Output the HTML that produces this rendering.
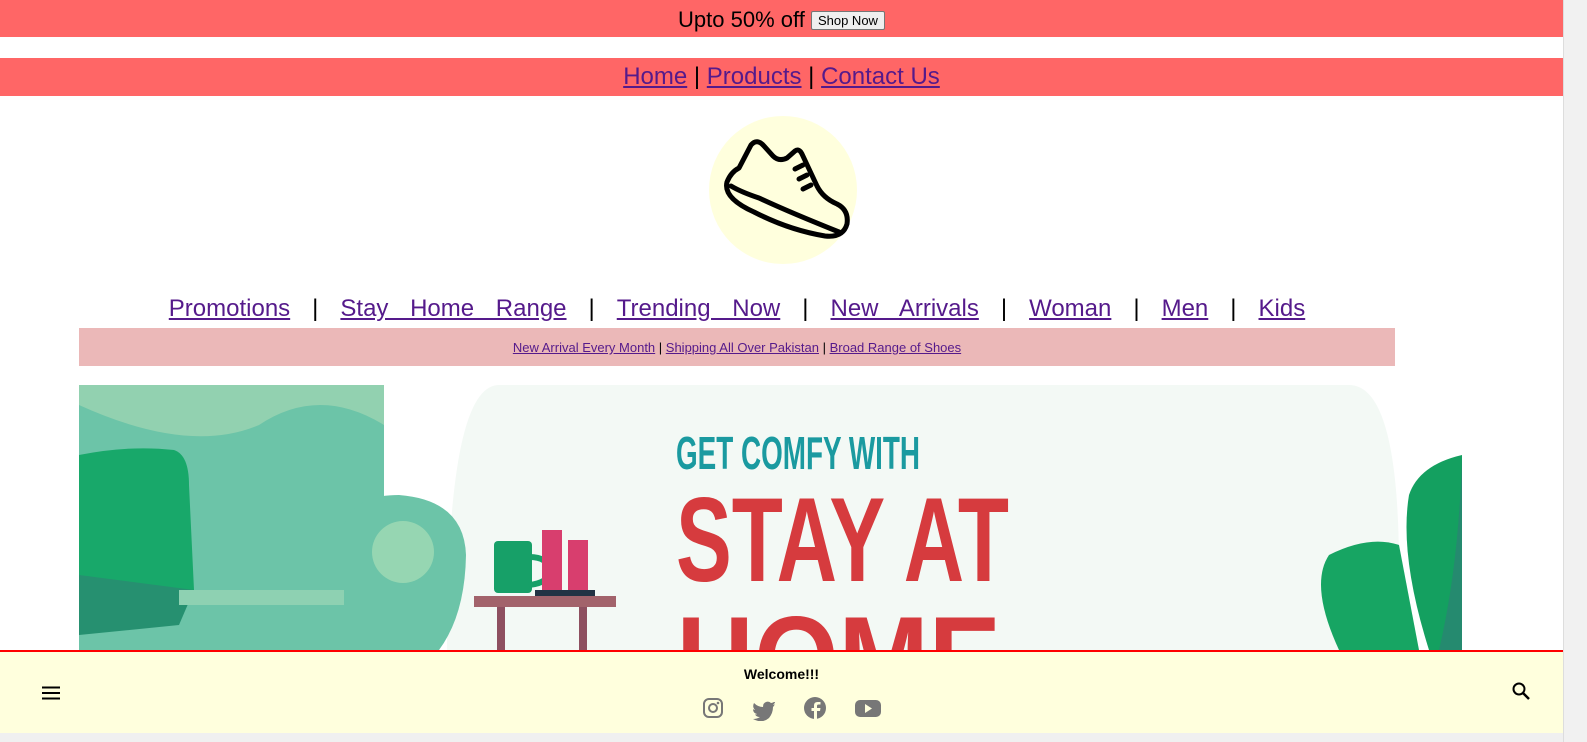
<!DOCTYPE html>
<html><head><meta charset="utf-8"><style>
*{margin:0;padding:0;box-sizing:border-box}
html,body{width:1587px;height:742px;overflow:hidden;background:#fff;font-family:"Liberation Sans","DejaVu Sans",sans-serif}
#sb{position:absolute;left:1563px;top:0;width:24px;height:742px;background:#f1f1f1;border-left:1px solid #ddd}
a{color:#551a8b}
.top{position:absolute;left:0;top:0;width:1563px;height:37px;background:#ff6666;text-align:center;font-size:22px;line-height:39px}
.top button{font-size:13px;padding:1px 6px;vertical-align:2px;background:#efefef;border:1px solid #767676;border-radius:2px}
.nav{position:absolute;left:0;top:58px;width:1563px;height:38px;background:#ff6666;text-align:center;font-size:24px;line-height:38px}
.logo{position:absolute;left:709px;top:116px;width:148px;height:148px;border-radius:50%;background:#ffffdd}
.cats{position:absolute;left:79px;top:291px;width:1316px;text-align:center;font-size:24px;line-height:36px;word-spacing:15px}
.cats span{margin:0 22px}
.strip{position:absolute;left:79px;top:328px;width:1316px;height:38px;background:#ebb8b8;text-align:center;font-size:13px;line-height:40px}
.ban{position:absolute;left:79px;top:385px;width:1383px;height:265px;overflow:hidden;background:#fff}
.foot{position:absolute;left:0;top:650px;width:1563px;height:83px;background:#ffffdd;border-top:2px solid #f00}
.bot{position:absolute;left:0;top:733px;width:1563px;height:9px;background:#f0f0f0}
</style></head><body>
<div class="top">Upto 50% off <button>Shop Now</button></div>
<div class="nav"><a href="#">Home</a> | <a href="#">Products</a> | <a href="#">Contact Us</a></div>
<div class="logo"><svg width="148" height="148" viewBox="0 0 148 148"><path d="M42 29 Q48 22 55 30 L64 40 Q70 46 78 42 L86 35 Q90 32 93 38 L108 70 Q114 82 128 88 Q140 94 138 108 Q134 122 116 120 Q80 114 45 96 Q14 82 18 66 Q22 56 30 52 Z M22 70 Q32 76 50 82 Q80 96 130 116" fill="none" stroke="#000" stroke-width="5" stroke-linejoin="round" stroke-linecap="round"/><path d="M86 53l8-4M90 63l8-4M94 73l8-4" stroke="#000" stroke-width="5" stroke-linecap="round"/></svg></div>
<div class="cats"><a href="#">Promotions</a><span>|</span><a href="#">Stay Home Range</a><span>|</span><a href="#">Trending Now</a><span>|</span><a href="#">New Arrivals</a><span>|</span><a href="#">Woman</a><span>|</span><a href="#">Men</a><span>|</span><a href="#">Kids</a></div>
<div class="strip"><a href="#">New Arrival Every Month</a> | <a href="#">Shipping All Over Pakistan</a> | <a href="#">Broad Range of Shoes</a></div>
<div class="ban"><svg width="1383" height="265" viewBox="0 0 1383 265">
<path d="M368 265 Q368 0 420 0 L1270 0 Q1330 0 1318 265Z" fill="#f3f9f5"/>
<rect x="0" y="0" width="305" height="265" fill="#6cc4a8"/>
<path d="M0 0H305V40Q240 0 180 40Q110 70 0 20Z" fill="#92d1b0"/>
<path d="M0 70Q50 60 95 65Q110 70 110 100L115 205Q60 215 0 230Z" fill="#18a86a"/>
<path d="M0 190L115 205L100 240L0 250Z" fill="#269070"/>
<rect x="100" y="205" width="200" height="15" fill="#8ed1b2"/>
<path d="M265 140Q275 110 320 110Q385 115 387 170Q386 230 360 265H265Z" fill="#6cc4a8"/>
<circle cx="324" cy="167" r="31" fill="#96d6b2"/>
<rect x="395" y="211" width="142" height="11" fill="#a2636b"/>
<rect x="418" y="222" width="8" height="43" fill="#8e5060"/><rect x="500" y="222" width="8" height="43" fill="#8e5060"/>
<rect x="415" y="156" width="38" height="52" rx="4" fill="#17a068"/>
<path d="M450 172q20 0 20 14q0 12-20 14" fill="none" stroke="#17a068" stroke-width="6"/>
<rect x="463" y="145" width="20" height="62" fill="#d83e6e"/><rect x="489" y="155" width="20" height="52" fill="#d83e6e"/>
<rect x="456" y="205" width="60" height="6" fill="#234"/>
<text x="597" y="84" font-family="Liberation Sans Narrow,Liberation Sans,sans-serif" font-weight="bold" font-size="46" fill="#1a9aa0" textLength="244" lengthAdjust="spacingAndGlyphs">GET COMFY WITH</text>
<text x="597" y="196" font-family="Liberation Sans Narrow,Liberation Sans,sans-serif" font-weight="bold" font-size="120" fill="#d63b3e" textLength="333" lengthAdjust="spacingAndGlyphs">STAY AT</text>
<text x="597" y="315" font-family="Liberation Sans Narrow,Liberation Sans,sans-serif" font-weight="bold" font-size="120" fill="#d63b3e" textLength="325" lengthAdjust="spacingAndGlyphs">HOME</text>
<path d="M1383 70Q1340 80 1330 110Q1320 170 1350 265H1383Z" fill="#14a060"/>
<path d="M1320 160Q1290 150 1250 170Q1230 200 1260 265H1340Z" fill="#17a563"/>
<path d="M1383 70V265H1360Q1380 180 1383 70Z" fill="#258a6f"/>
</svg></div>
<div class="foot">
<svg style="position:absolute;left:42px;top:34px" width="18" height="14"><path d="M0 1.5h18M0 7h18M0 12.5h18" stroke="#000" stroke-width="2"/></svg>
<div style="position:absolute;left:0;width:1563px;top:14px;text-align:center;font-weight:bold;font-size:14px">Welcome!!!</div>
<svg style="position:absolute;left:702px;top:45px" width="180" height="24" fill="#777">
<rect x="2" y="2" width="18" height="18" rx="5" fill="none" stroke="#777" stroke-width="2"/><circle cx="11" cy="11" r="4" fill="none" stroke="#777" stroke-width="2"/><circle cx="16" cy="6" r="1.3"/>
<path d="M72 5q-2 1-3 1q-2-2-5-1q-3 1-3 5q-5 0-9-4q-2 4 1 7q-1 0-2-1q0 4 4 5q-1 1-2 0q1 3 5 3q-3 2-7 2q9 5 16-1q4-5 4-11q1-1 2-3q-1 1-2 1q2-2 2-3z"/>
<circle cx="113" cy="11" r="11"/><path d="M115 22v-8h3l.5-3H115V9q0-1.5 1.5-1.5h2V5h-3q-3.5 0-3.5 3.5V11h-2.5v3h2.5v8z" fill="#ffffdd"/>
<rect x="153" y="3" width="26" height="17" rx="5"/><path d="M163 7v9l7-4.5z" fill="#ffffdd"/>
</svg>
<svg style="position:absolute;left:1512px;top:30px" width="20" height="20"><circle cx="7" cy="7" r="5.5" fill="none" stroke="#000" stroke-width="2"/><path d="M11 11l6 6" stroke="#000" stroke-width="2.5"/></svg>
</div>
<div class="bot"></div>
<div id="sb"></div>
</body></html>
